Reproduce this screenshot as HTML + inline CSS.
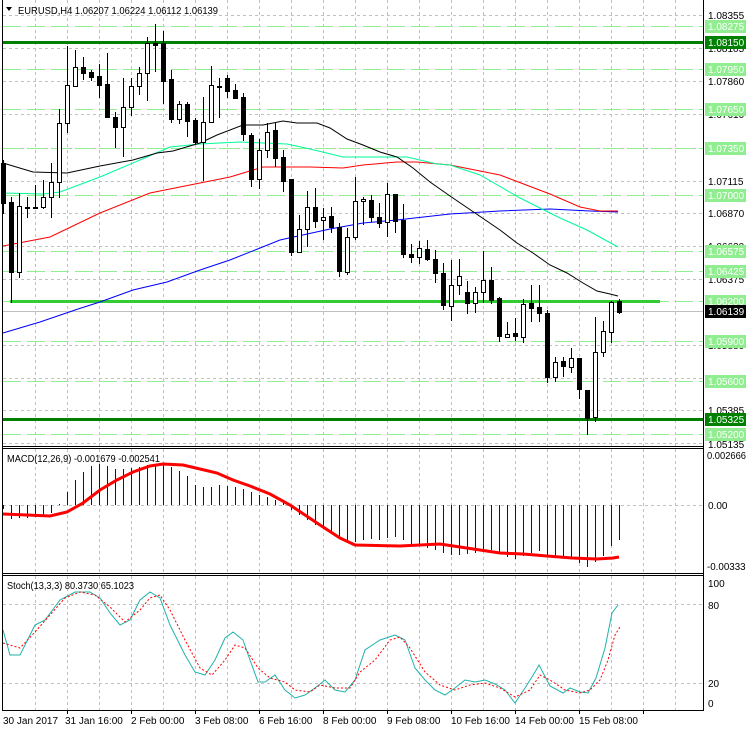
<!DOCTYPE html>
<html><head><meta charset="utf-8"><style>
html,body{margin:0;padding:0;background:#fff;}
svg{display:block;font-family:"Liberation Sans",sans-serif;font-size:10px;}
</style></head><body>
<svg id="s" width="746" height="731" viewBox="0 0 746 731" xmlns="http://www.w3.org/2000/svg">
<rect width="746" height="731" fill="#fff"/>
<g id="grid" stroke="#c0c0c0" stroke-width="1" stroke-dasharray="3,3" fill="none"></g>
<g id="lev"></g>
<g id="ma" fill="none" stroke-width="1">
<polyline stroke="#0000ff" points="3,333 40,322 78,309 100,302 133,290 167,282 200,270 230,260 280,240 330,229 363,223 397,220 450,214 500,211 550,209 590,211 618,212"/>
<polyline stroke="#ff0000" points="3,246 50,237 100,213 150,193 200,183 230,177 263,167 310,167 343,168 363,165 397,162 417,162 450,165 500,175 550,194 580,207 600,211 618,211"/>
<polyline stroke="#00fa9a" points="3,193 43,194 60,192 100,177 147,157 170,147 200,144 240,142 287,144 310,149 343,157 373,157 407,157 437,164 450,165 480,175 520,198 560,218 587,230 618,247"/>
<polyline stroke="#000000" points="3,163 33,172 67,173 100,166 133,160 157,153 173,151 200,143 217,135 243,125 263,125 283,121 297,123 317,123 330,128 347,139 363,145 380,152 397,157 413,168 430,182 450,196 500,230 517,243 533,253 550,265 567,273 583,283 597,291 610,294 618,296"/>
</g>
<g id="cd"></g>
<g id="macd"></g>
<polyline fill="none" stroke="#ff0000" stroke-width="3" points="3,514 50,516 67,512 83,503 100,490 117,480 133,472 150,466 163,464 183,465 200,469 217,473 233,480 250,486 270,494 290,505 320,525 340,538 355,545 400,546 440,544 480,550 500,553 523,554 547,556 572,558 597,559 613,558 619,557"/>
<polyline fill="none" stroke="#20b2aa" stroke-width="1" points="3,630 10,655 20,655 35,625 45,620 60,600 75,592 90,592 100,598 110,613 120,625 130,620 140,600 150,592 160,598 170,625 185,655 195,672 205,675 215,660 225,638 233,632 243,640 250,660 258,682 265,682 275,675 285,690 295,698 305,695 315,688 325,680 335,690 345,692 355,680 365,650 380,640 395,635 405,640 415,668 425,680 435,690 445,695 455,688 465,680 475,682 485,680 495,684 505,690 515,703 525,688 535,672 539,665 550,686 563,693 570,688 580,692 588,693 596,678 605,648 612,613 618,605"/>
<polyline fill="none" stroke="#ff0000" stroke-width="1" stroke-dasharray="2,2" points="3,643 20,648 35,632 50,615 65,598 80,592 95,595 110,607 125,622 140,610 150,598 160,595 170,610 185,640 200,668 212,675 225,660 235,645 245,648 258,668 270,678 285,682 295,690 310,692 320,685 335,688 350,688 360,672 375,660 390,640 400,637 410,648 425,672 440,685 455,690 470,685 485,683 500,688 515,697 530,690 540,675 550,680 565,690 580,693 590,690 600,680 608,660 615,635 620,627"/>
<g stroke="#000" stroke-width="1" fill="none">
<line x1="2.5" y1="0" x2="2.5" y2="710"/>
<line x1="703.5" y1="0" x2="703.5" y2="711"/>
<line x1="2" y1="446.5" x2="704" y2="446.5"/>
<line x1="2" y1="448.5" x2="704" y2="448.5"/>
<line x1="2" y1="573.5" x2="704" y2="573.5"/>
<line x1="2" y1="575.5" x2="704" y2="575.5"/>
<line x1="2" y1="710.5" x2="704" y2="710.5"/>
</g>
<g id="ticks" stroke="#000"></g>
<g id="axis" fill="#000">
<text x="708" y="19">1.08355</text>
<text x="708" y="52">1.08105</text>
<text x="708" y="85">1.07860</text>
<text x="708" y="118">1.07610</text>
<text x="708" y="185">1.07115</text>
<text x="708" y="217">1.06870</text>
<text x="708" y="250">1.06620</text>
<text x="708" y="283">1.06375</text>
<text x="708" y="349">1.05880</text>
<text x="708" y="382">1.05630</text>
<text x="708" y="414">1.05385</text>
<text x="708" y="448">1.05135</text>
</g>
<g id="labels"></g>
<g fill="#000">
<text x="707" y="459" textLength="39" lengthAdjust="spacingAndGlyphs">0.002666</text>
<text x="708" y="509">0.00</text>
<text x="707" y="570" textLength="44" lengthAdjust="spacingAndGlyphs">-0.003336</text>
<text x="708" y="587">100</text>
<text x="708" y="609">80</text>
<text x="708" y="687">20</text>
<text x="708" y="707">0</text>
<polygon points="6,7 12,7 9,11"/>
<text x="18" y="14" textLength="200" lengthAdjust="spacingAndGlyphs">EURUSD,H4  1.06207 1.06224 1.06112 1.06139</text>
<text x="7" y="462" textLength="153" lengthAdjust="spacingAndGlyphs">MACD(12,26,9) -0.001679 -0.002541</text>
<text x="7" y="589" textLength="127" lengthAdjust="spacingAndGlyphs">Stoch(13,3,3) 80.3730 65.1023</text>
<text x="3" y="724">30 Jan 2017</text>
<text x="65" y="724">31 Jan 16:00</text>
<text x="131" y="724">2 Feb 00:00</text>
<text x="195" y="724">3 Feb 08:00</text>
<text x="259" y="724">6 Feb 16:00</text>
<text x="323" y="724">8 Feb 00:00</text>
<text x="387" y="724">9 Feb 08:00</text>
<text x="451" y="724">10 Feb 16:00</text>
<text x="515" y="724">14 Feb 00:00</text>
<text x="579" y="724">15 Feb 08:00</text>
</g>
</svg>
<script>
var NS="http://www.w3.org/2000/svg";
function el(p,t,a){var e=document.createElementNS(NS,t);for(var k in a)e.setAttribute(k,a[k]);document.getElementById(p).appendChild(e);return e;}
for(var x=35;x<=700;x+=32){el("grid","line",{x1:x+.5,y1:0,x2:x+.5,y2:446});el("grid","line",{x1:x+.5,y1:449,x2:x+.5,y2:573});el("grid","line",{x1:x+.5,y1:576,x2:x+.5,y2:710});}
[15,48,81,114,148,181,213,246,279,311,345,378,410,443].forEach(function(y){el("grid","line",{x1:3,y1:y+.5,x2:703,y2:y+.5});});
[505,604,683].forEach(function(y){el("grid","line",{x1:3,y1:y+.5,x2:703,y2:y+.5});});
[26,69,109,148,195,251,271,341,381,434].forEach(function(y){el("lev","line",{x1:3,y1:y+.5,x2:703,y2:y+.5,stroke:"#90ee90","stroke-dasharray":"18,6"});});
el("lev","line",{x1:3,y1:42.5,x2:703,y2:42.5,stroke:"#008000","stroke-width":3});
el("lev","line",{x1:3,y1:419.5,x2:703,y2:419.5,stroke:"#008000","stroke-width":3});
el("lev","line",{x1:3,y1:301.5,x2:703,y2:301.5,stroke:"#90ee90","stroke-dasharray":"18,6"});
el("lev","line",{x1:10,y1:301.5,x2:660,y2:301.5,stroke:"#32cd32","stroke-width":3});
el("lev","line",{x1:3,y1:311.5,x2:703,y2:311.5,stroke:"#c0c0c0"});
var C=[[163,203,160,214,0],[202,272,197,303,0],[206,272,193,278,1],[207,208,197,218,0],[207,208,185,208,0],[197,207,180,209,1],[182,197,163,218,1],[123,182,109,198,1],[85,123,46,133,1],[67,86,50,87,1],[67,73,57,80,0],[72,77,70,81,0],[76,85,64,98,0],[84,117,53,117,0],[117,127,112,148,0],[107,127,78,157,1],[86,107,78,116,1],[73,86,67,95,1],[43,73,37,101,1],[43,45,24,72,0],[43,81,31,104,0],[79,119,70,123,0],[104,119,101,124,1],[104,121,102,137,0],[120,142,118,145,0],[122,142,97,181,1],[85,122,66,123,1],[86,87,78,118,0],[78,91,75,98,0],[90,98,84,99,0],[97,134,93,141,0],[135,179,133,187,0],[150,179,139,189,1],[132,150,123,158,1],[130,158,123,167,0],[157,181,150,192,0],[179,252,179,256,0],[229,252,215,253,1],[207,229,191,247,1],[207,221,188,228,0],[217,220,208,240,1],[216,227,207,233,0],[227,271,223,277,0],[237,272,228,275,1],[201,237,177,240,1],[199,201,197,225,1],[200,217,195,222,0],[217,223,203,228,0],[194,222,183,237,1],[194,221,194,233,0],[220,254,204,258,0],[254,257,244,263,0],[248,257,241,264,1],[249,259,240,261,0],[259,273,250,283,0],[273,305,263,310,0],[285,306,260,321,1],[276,285,259,295,1],[292,303,281,314,0],[292,303,287,313,1],[280,292,251,303,1],[280,300,267,304,0],[298,336,297,342,0],[334,337,322,338,1],[333,336,318,341,0],[304,337,299,343,1],[303,308,285,322,0],[307,313,285,322,0],[313,377,310,383,0],[362,377,357,382,1],[361,366,357,377,0],[358,367,348,373,1],[358,389,358,399,0],[390,418,390,435,0],[352,417,317,422,1],[331,352,321,357,1],[302,332,301,343,1],[301,312,299,314,0]];
C.forEach(function(c,i){var x=3+8*i;
el("cd","line",{x1:x+.5,y1:c[2],x2:x+.5,y2:c[3],stroke:"#000"});
var h=Math.max(1,c[1]-c[0]);
if(c[4])el("cd","rect",{x:x-1.5,y:c[0]+.5,width:4,height:h,fill:"#fff",stroke:"#000"});
else el("cd","rect",{x:x-2,y:c[0],width:5,height:h+1,fill:"#000"});
});
var M=[509,519,518,518,517,515,513,504,492,480,472,466,464,466,469,469,468,467,465,464,464,467,471,476,485,487,487,485,486,487,489,492,495,497,500,503,510,515,520,525,528,532,538,542,542,540,539,540,538,537,540,544,546,548,550,553,555,555,554,553,551,550,553,557,559,556,553,551,555,558,557,558,563,567,562,556,546,540];
M.forEach(function(y,i){var x=3+8*i+.5;el("macd","line",{x1:x,y1:505,x2:x,y2:y,stroke:"#0000cd","stroke-width":1});});
function lab(y,t,bg){el("labels","rect",{x:705,y:y-6,width:41,height:13,fill:bg});var e=el("labels","text",{x:708,y:y+4,fill:"#fff"});e.textContent=t;}
lab(26,"1.08275","#90ee90");lab(42,"1.08150","#008000");lab(69,"1.07950","#90ee90");lab(109,"1.07650","#90ee90");lab(148,"1.07350","#90ee90");lab(195,"1.07000","#90ee90");lab(251,"1.06575","#90ee90");lab(271,"1.06425","#90ee90");lab(301,"1.06200","#90ee90");lab(311,"1.06139","#000");lab(341,"1.05900","#90ee90");lab(381,"1.05600","#90ee90");lab(419,"1.05325","#008000");lab(434,"1.05200","#90ee90");
for(var x=67;x<700;x+=64)el("ticks","line",{x1:x+.5,y1:710,x2:x+.5,y2:714});
</script>
</body></html>
